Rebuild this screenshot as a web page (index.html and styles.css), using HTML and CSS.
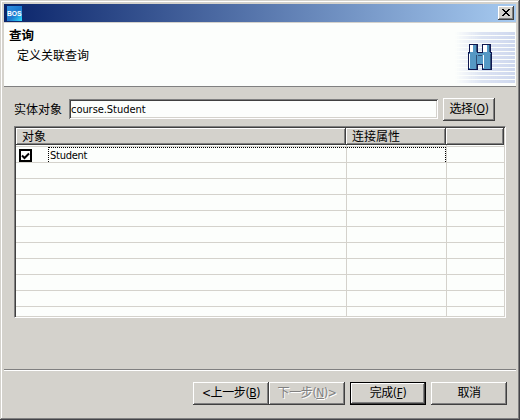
FILE: index.html
```html
<!DOCTYPE html>
<html lang="zh-CN">
<head>
<meta charset="utf-8">
<title>查询</title>
<link rel="stylesheet" href="styles.css">
</head>
<body>
<main class="window">
  <header class="titlebar">
    <svg class="logo" width="15" height="15" viewBox="0 0 15 15">
      <defs><linearGradient id="lg" x1="0" y1="0" x2="1" y2="1"><stop offset="0" stop-color="#2f8fe0"/><stop offset=".55" stop-color="#1c78cf"/><stop offset="1" stop-color="#30e0ff"/></linearGradient></defs>
      <rect width="15" height="15" fill="url(#lg)"/>
      <text x="0" y="10" textLength="14.5" lengthAdjust="spacingAndGlyphs" class="logo-text">BOS</text>
    </svg>
    <button class="close" aria-label="关闭"><svg width="8" height="7" viewBox="0 0 8 7" shape-rendering="crispEdges"><path d="M0 0h2v1h1v1h2V1h1V0h2v1H7v1H6v1H5v1h1v1h1v1h1v1H6V6H5V5H3v1H2v1H0V6h1V5h1V4h1V3H2V2H1V1H0z"/></svg></button>
  </header>
  <section class="banner">
    <div class="intro">
      <h1>查询</h1>
      <p>定义关联查询</p>
    </div>
    <svg class="art" width="60" height="52" viewBox="0 0 60 52" shape-rendering="crispEdges">
      <defs>
        <linearGradient id="fade"><stop offset="0" stop-color="#d4dcf0" stop-opacity="0"/><stop offset=".45" stop-color="#d4dcf0" stop-opacity=".8"/><stop offset="1" stop-color="#ced8ee"/></linearGradient>
        <pattern id="lines" width="60" height="4" patternUnits="userSpaceOnUse"><rect width="60" height="3" fill="url(#fade)"/></pattern>
      </defs>
      <rect width="60" height="52" fill="url(#lines)"/>
      <g transform="translate(13 12)">
        <path fill="#101850" d="M1 0h9v8h4V0h9v8h1v18H14v-5h-4v5H0V8h1z"/>
        <path fill="#5598c4" d="M2 1h7v8h6V1h7v8h1v16h-8v-5H9v5H1V9h1z"/>
        <path fill="#fff" d="M2 1h3v7H2zM15 1h4v7h-4zM1 10h1v14H1zM15 11h1v13h-1z"/>
        <path fill="#305078" d="M8 1h1v7H8zM21 1h1v7h-1zM8 11h1v14H8zM22 10h1v15h-1zM10 11h4v1h-4z"/>
      </g>
    </svg>
  </section>
  <section class="body">
    <div class="field">
      <label for="entity">实体对象</label>
      <input id="entity" value="course.Student">
      <button class="btn choose">选择(<u>O</u>)</button>
    </div>
    <div class="table">
      <div class="row head"><span>对象</span><span>连接属性</span><span></span></div>
      <div class="row gap"><span></span><span></span><span></span></div>
      <div class="row first">
        <span class="object"><i class="check"><svg width="9" height="8" viewBox="0 0 9 8"><path d="M1 3.5l2.5 2.5L8 1.5" fill="none" stroke="#000" stroke-width="2"/></svg></i><b class="name">Student</b></span><span class="focus"></span><span></span>
      </div>
      <div class="row"><span></span><span></span><span></span></div>
      <div class="row"><span></span><span></span><span></span></div>
      <div class="row"><span></span><span></span><span></span></div>
      <div class="row"><span></span><span></span><span></span></div>
      <div class="row"><span></span><span></span><span></span></div>
      <div class="row"><span></span><span></span><span></span></div>
      <div class="row"><span></span><span></span><span></span></div>
      <div class="row"><span></span><span></span><span></span></div>
      <div class="row"><span></span><span></span><span></span></div>
      <div class="row last"><span></span><span></span><span></span></div>
    </div>
  </section>
  <footer class="actions">
    <button class="btn">&lt;上一步(<u>B</u>)</button>
    <button class="btn off" disabled>下一步(<u>N</u>)&gt;</button>
    <button class="btn default">完成(<u>F</u>)</button>
    <button class="btn">取消</button>
  </footer>
</main>
</body>
</html>
```
FILE: styles.css
```css
* { box-sizing: border-box; }
body {
  margin: 0;
  background: #d4d2cc;
  color: #000;
  font: 12px/16px "DejaVu Sans Condensed", "Noto Sans CJK SC", sans-serif;
}
.window {
  width: 520px;
  height: 420px;
  display: flex;
  flex-direction: column;
  padding: 4px;
  background: #d4d2cc;
  box-shadow: inset -1px -1px #444448, inset 1px 1px #d4d2cc, inset -2px -2px #808080, inset 2px 2px #fff;
}
.titlebar {
  height: 18px;
  display: flex;
  align-items: center;
  justify-content: space-between;
  padding: 0 2px 0 3px;
  background: linear-gradient(90deg, #0a246a, #a6caf0);
}
.logo-text { font: bold 7.5px "Liberation Sans", sans-serif; fill: #fff; }
.close {
  width: 16px;
  height: 14px;
  display: flex;
  align-items: center;
  justify-content: center;
  padding: 0 1px 1px 0;
  border: 0;
  background: #d4d2cc;
  box-shadow: inset -1px -1px #404040, inset 1px 1px #fff, inset -2px -2px #808080;
}
.banner {
  height: 65px;
  display: flex;
  justify-content: space-between;
  padding: 5px 1px 0 5px;
  background: #fcfefc;
  border-top: 1px solid #d4d2cc;
  border-bottom: 1px solid #808080;
}
.banner h1 { margin: 0; font-size: 12.5px; line-height: 16px; font-weight: 700; }
.banner p { margin: 4px 0 0 8px; }
.art { display: block; margin-top: 4px; }
.body { height: 283px; padding: 11px 10px 0; border-bottom: 1px solid #808080; }
.field { height: 22px; display: flex; align-items: center; }
.field label { width: 55px; padding-top: 2px; white-space: nowrap; }
.field input {
  width: 369px;
  height: 20px;
  margin-right: 5px;
  padding: 0 2px;
  border: 0;
  background: #fcfefc;
  box-shadow: inset 1px 1px #808080, inset -1px -1px #fff, inset 2px 2px #404040, inset -2px -2px #d4d2cc;
  font: 11px "DejaVu Sans Condensed", sans-serif;
  letter-spacing: -.05px;
}
.btn {
  width: 76px;
  height: 23px;
  padding: 0 0 1px;
  border: 0;
  background: #d4d2cc;
  box-shadow: inset -1px -1px #404040, inset 1px 1px #fff, inset -2px -2px #808080;
  color: #000;
  font: 12px/20px "DejaVu Sans Condensed", "Noto Sans CJK SC", sans-serif;
  letter-spacing: -.4px;
  white-space: nowrap;
}
.btn u { text-underline-offset: 1px; }
.choose { width: 52px; }
.table {
  width: 492px;
  height: 192px;
  margin-top: 6px;
  background: #fcfefc;
  border: 1px solid #808080;
  border-right-color: #fff;
  border-bottom-color: #fff;
  box-shadow: inset 1px 1px #404040, inset -1px -1px #d4d2cc;
  padding: 1px;
}
.row { display: grid; grid-template-columns: 331px 100px 1fr; height: 16px; }
.row span { border-right: 1px solid #d4d2cc; border-bottom: 1px solid #d4d2cc; }
.row span:last-child { border-right: 0; }
.row.head { height: 17px; grid-template-columns: 330px 100px 1fr; }
.row.head span {
  padding-left: 6px;
  border: 0;
  background: #d4d2cc;
  line-height: 17px;
  padding-top: 1px;
  height: 17px;
  box-shadow: inset -1px -1px #404040, inset 1px 1px #fff, inset -2px -2px #808080;
}
.row.gap { height: 2px; }
.row.last { height: 9px; }
.row.last span { border-bottom: 0; }
.row .object { display: flex; align-items: flex-start; }
.check {
  width: 13px;
  height: 13px;
  display: grid;
  place-items: center;
  margin: 2px 16px 0 3px;
  border: 2px solid #000;
}
.name {
  flex: 1;
  height: 15px;
  padding-left: 1px;
  border-top: 1px dotted #000;
  border-left: 1px dotted #000;
  font: 11px/15px "DejaVu Sans Condensed", sans-serif;
  letter-spacing: -.25px;
}
.row .focus { position: relative; }
.focus::after {
  content: "";
  position: absolute;
  inset: 0 0 0 0;
  border-top: 1px dotted #000;
  border-right: 1px dotted #000;
}
.actions {
  flex: 1;
  display: flex;
  padding: 11px 9px 0 189px;
  border-top: 1px solid #fff;
}
.off { color: #808080; text-shadow: 1px 1px #fff; }
.default {
  margin: 0 5px;
  box-shadow: inset 0 0 0 1px #000, inset -2px -2px #404040, inset 2px 2px #fff, inset -3px -3px #808080;
}
```
